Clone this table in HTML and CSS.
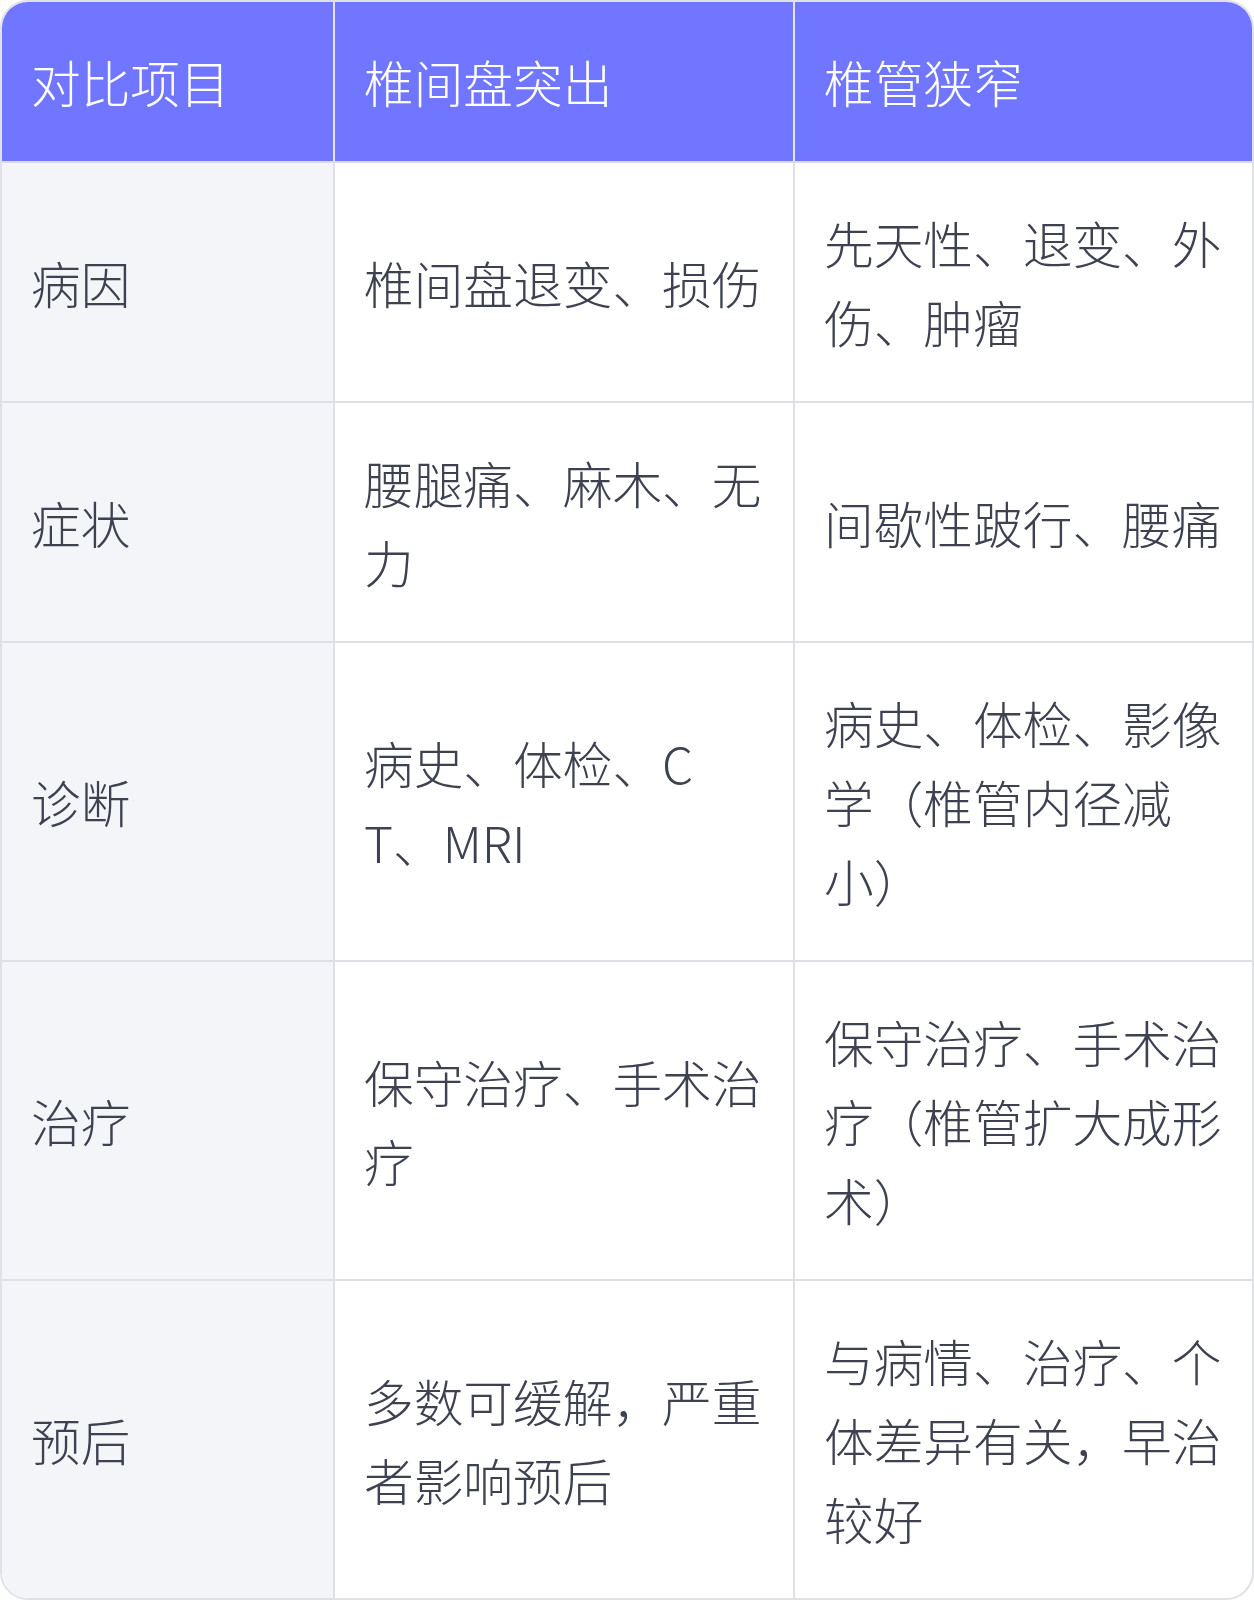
FILE: index.html
```html
<!DOCTYPE html>
<html lang="zh-CN">
<head>
<meta charset="utf-8">
<title>椎间盘突出与椎管狭窄对比</title>
<link rel="stylesheet" href="styles.css">
</head>
<body>
<div class="card">
  <table class="compare">
    <colgroup>
      <col class="c1">
      <col class="c2">
      <col class="c3">
    </colgroup>
    <thead>
      <tr>
        <th>对比项目</th>
        <th>椎间盘突出</th>
        <th>椎管狭窄</th>
      </tr>
    </thead>
    <tbody>
      <tr>
        <td class="label">病因</td>
        <td>椎间盘退变、损伤</td>
        <td>先天性、退变、外伤、肿瘤</td>
      </tr>
      <tr>
        <td class="label">症状</td>
        <td>腰腿痛、麻木、无力</td>
        <td>间歇性跛行、腰痛</td>
      </tr>
      <tr>
        <td class="label">诊断</td>
        <td>病史、体检、C<br>T、MRI</td>
        <td>病史、体检、影像学（椎管内径减小）</td>
      </tr>
      <tr>
        <td class="label">治疗</td>
        <td>保守治疗、手术治疗</td>
        <td>保守治疗、手术治疗（椎管扩大成形术）</td>
      </tr>
      <tr>
        <td class="label">预后</td>
        <td>多数可缓解，严重者影响预后</td>
        <td>与病情、治疗、个体差异有关，早治较好</td>
      </tr>
    </tbody>
  </table>
</div>
</body>
</html>
```

FILE: styles.css
```css
html, body {
  margin: 0;
  padding: 0;
  background: #ffffff;
}

.card {
  width: 1254px;
  box-sizing: border-box;
  border: 2px solid #e0e1e6;
  border-radius: 28px;
  overflow: hidden;
  background: #ffffff;
}

.compare {
  width: 100%;
  border-collapse: separate;
  border-spacing: 0;
  table-layout: fixed;
  font-family: "Noto Sans CJK SC", "Noto Sans", sans-serif;
  font-weight: 300;
  font-size: 49.7px;
  line-height: 79px;
  color: #3e4150;
}

.c1 { width: 331px; }
.c2 { width: 460px; }
.c3 { width: 459px; }

.compare th,
.compare td {
  padding: 40px 29px;
  text-align: left;
  vertical-align: middle;
  word-break: break-all;
  border-left: 2px solid #dfe0e6;
  border-top: 2px solid #dfe0e6;
}

.compare th:first-child,
.compare td:first-child {
  border-left: none;
}

.compare th {
  background: #7076ff;
  color: #ffffff;
  font-weight: 300;
  border-top: none;
  border-left-color: #e4e5f4;
}

.compare tbody tr:first-child td {
  border-top-color: #d9daf0;
}

.compare td.label {
  background: #f4f5f9;
}
```
